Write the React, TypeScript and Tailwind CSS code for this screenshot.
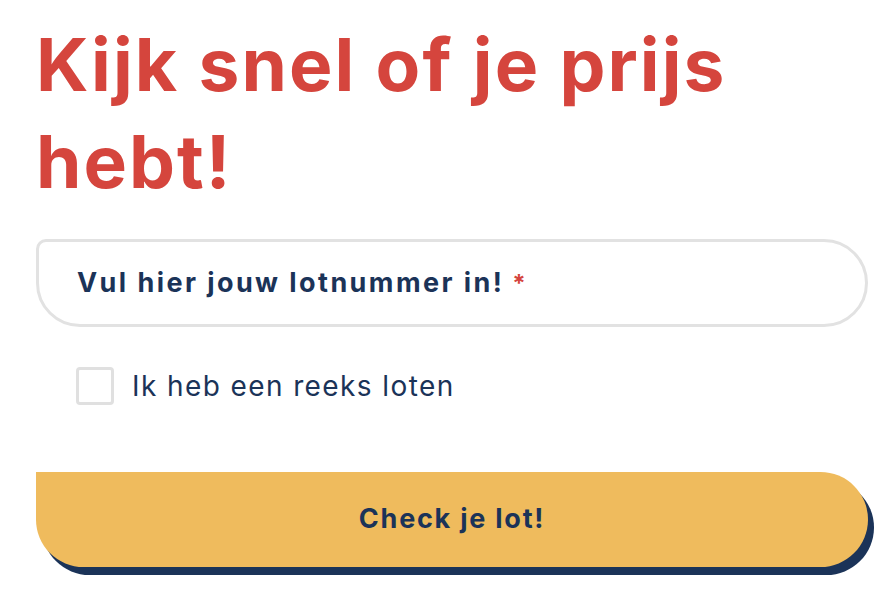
import { useState } from "react";

const App = () => {
  const [series, setSeries] = useState(false);

  return (
    <div className="min-h-[610px] bg-white pl-9 pt-4 font-['Inter',sans-serif]">
      <h1 className="w-[800px] text-[73px] font-bold leading-[97px] tracking-[0.028em] text-[#d5453d]">
        Kijk snel of je prijs hebt!
      </h1>

      {/* Lotnummer */}
      <div className="mt-[29px] flex h-[88px] w-[832px] items-center rounded-[44px] rounded-tl-[10px] border-[3px] border-[#e2e2e2] pl-[38px]">
        <span className="text-[27px] font-bold tracking-[0.09em] text-[#1b3358]">
          Vul hier jouw lotnummer in!
          <span className="ml-2 text-[24px] text-[#d5453d]">*</span>
        </span>
      </div>

      <label className="ml-10 mt-10 flex h-[38px] items-center gap-[18px]">
        <input
          type="checkbox"
          checked={series}
          onChange={() => setSeries(!series)}
          className="h-[38px] w-[38px] shrink-0 appearance-none rounded-[4px] border-[3px] border-[#e0e0e0] bg-white"
        />
        <span className="text-[28px] leading-[38px] tracking-[0.05em] text-[#1b3358]">
          Ik heb een reeks loten
        </span>
      </label>

      <button className="mt-[67px] flex h-[95px] w-[832px] items-center justify-center rounded-[48px] rounded-tl-none bg-[#efbb5d] text-[27px] font-bold tracking-[0.065em] text-[#1b3358] shadow-[6px_8px_0_#1b3358]">
        Check je lot!
      </button>
    </div>
  );
};

export default App;
